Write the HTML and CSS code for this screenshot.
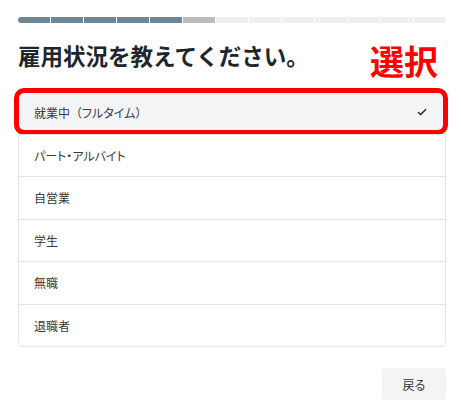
FILE: index.html
```html
<html>
    <head>
        <meta charset="utf-8">
        <link rel="stylesheet" href="styles.css">
    </head>
    <body>
        <section class="page">
            <div class="progress">
                <span class="step done"></span>
                <span class="step done"></span>
                <span class="step done"></span>
                <span class="step done"></span>
                <span class="step done"></span>
                <span class="step current"></span>
                <span class="step"></span>
                <span class="step"></span>
                <span class="step"></span>
                <span class="step"></span>
                <span class="step"></span>
                <span class="step"></span>
                <span class="step"></span>
            </div>

            <div class="title-row">
                <h1 class="title">雇用状況を教えてください。</h1>
                <span class="note">選択</span>
            </div>

            <ul class="options">
                <li class="option selected">
                    <span>就業中（<span class="kana">フルタイム</span>）</span>
                    <svg class="check" width="10" height="8" viewBox="0 0 10 8"><path d="M1 4.2 L3.6 6.6 L9 1.2" fill="none" stroke="#222" stroke-width="1.4"/></svg>
                    <div class="mark"></div>
                </li>
                <li class="option"><span class="kana">パート・アルバイト</span></li>
                <li class="option">自営業</li>
                <li class="option">学生</li>
                <li class="option">無職</li>
                <li class="option">退職者</li>
            </ul>

            <div class="actions">
                <button class="back">戻る</button>
            </div>
        </section>
    </body>
</html>
```

FILE: styles.css
```css
* { box-sizing: border-box; }

html, body {
    margin: 0;
    padding: 0;
    background: #fff;
    font-family: "Noto Sans CJK JP", "Noto Sans", sans-serif;
}

.page {
    position: relative;
    width: 461px;
    height: 414px;
    padding: 17px 15px 0 18px;
}

.progress {
    display: flex;
    gap: 1px;
    height: 6px;
    border-radius: 3px;
    overflow: hidden;
}
.step { flex: 1; background: #eeeff1; }
.step.done { background: #6e8594; }
.step.current { background: #bcbcbc; }

.title-row {
    height: 67px;
    display: flex;
    align-items: center;
}
.title {
    margin: 0 0 3px 0;
    font-size: 22.5px;
    font-weight: 700;
    color: #1d262b;
}
.note {
    position: absolute;
    left: 370px;
    top: 44px;
    font-size: 34px;
    line-height: 1;
    font-weight: 700;
    color: #ff0000;
}

.options {
    list-style: none;
    margin: 0;
    padding: 0;
    border: 1px solid #e3e3e3;
    border-radius: 5px;
}
.option {
    position: relative;
    display: flex;
    align-items: center;
    justify-content: space-between;
    height: 42.5px;
    padding: 0 18px 0 15px;
    font-size: 12px;
    color: #3b3b3b;
    border-top: 1px solid #e3e3e3;
}
.option:first-child { border-top: none; }
.option.selected { background: #f3f4f6; }
.kana { font-feature-settings: "palt"; }
.mark {
    position: absolute;
    left: -5px;
    right: -3px;
    top: -3px;
    bottom: -1px;
    border: 5px solid #ff0000;
    border-radius: 10px;
}

.actions {
    display: flex;
    justify-content: flex-end;
    padding-top: 21px;
}
.back {
    width: 64px;
    height: 32px;
    border: none;
    border-radius: 4px;
    background: #f3f4f6;
    color: #333;
    font-family: inherit;
    font-size: 12px;
    font-feature-settings: "palt";
}
```
